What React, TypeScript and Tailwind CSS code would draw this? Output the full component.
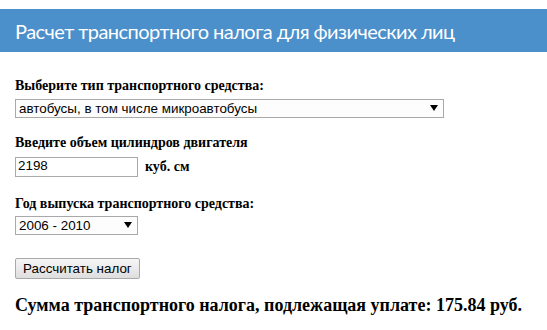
import React, { useState } from "react";

const serif = "font-['Liberation_Serif','Times_New_Roman',serif]";
const sans = "font-['Liberation_Sans',Arial,sans-serif]";

function Select({
  value,
  options,
  width,
  onChange,
}: {
  value: string;
  options: string[];
  width: string;
  onChange: (v: string) => void;
}) {
  return (
    <div className={`relative ${width}`}>
      <select
        value={value}
        onChange={(e) => onChange(e.target.value)}
        className={`${sans} block appearance-none w-full h-[19px] border border-[#a9a9a9] bg-[#fdfdfd] pl-[3px] pr-5 text-[13.4px] leading-[17px] text-black rounded-none outline-none`}
      >
        {options.map((o) => (
          <option key={o}>{o}</option>
        ))}
      </select>
      {/* dropdown arrow */}
      <span className="pointer-events-none absolute right-[6px] top-[6px] w-0 h-0 border-l-[4px] border-r-[4px] border-t-[6px] border-l-transparent border-r-transparent border-t-black" />
    </div>
  );
}

export default function App() {
  const [type, setType] = useState("автобусы, в том числе микроавтобусы");
  const [volume, setVolume] = useState("2198");
  const [year, setYear] = useState("2006 - 2010");

  return (
    <div className="w-[547px] h-[330px] bg-white overflow-hidden pt-[9px]">
      <div className="h-[43px] bg-[#4b8fcb] flex items-center pl-[15px]">
        <h1 className="font-['Lato',sans-serif] text-[20px] tracking-[-0.55px] text-white leading-none">
          Расчет транспортного налога для физических лиц
        </h1>
      </div>

      <div className="px-[15px] pt-[26px]">
        <label className={`${serif} block font-bold text-[14px] leading-[15px] text-black mb-[6px]`}>
          Выберите тип транспортного средства:
        </label>
        <Select
          value={type}
          onChange={setType}
          width="w-[429px]"
          options={[
            "легковые автомобили",
            "автобусы, в том числе микроавтобусы",
            "грузовые автомобили",
          ]}
        />

        <label className={`${serif} block font-bold text-[14px] leading-[15px] text-black mt-[17px] mb-[6px]`}>
          Введите объем цилиндров двигателя
        </label>
        <div className="flex items-center gap-[7px]">
          <input
            value={volume}
            onChange={(e) => setVolume(e.target.value)}
            className={`${sans} block w-[123px] h-[20px] border border-[#a9a9a9] px-[2px] text-[13.4px] text-black outline-none`}
          />
          <span className={`${serif} font-bold text-[14px] text-black`}>куб. см</span>
        </div>

        <label className={`${serif} block font-bold text-[14px] leading-[15px] text-black mt-[19px] mb-[5px]`}>
          Год выпуска транспортного средства:
        </label>
        <Select
          value={year}
          onChange={setYear}
          width="w-[123px]"
          options={["до 2000", "2001 - 2005", "2006 - 2010", "после 2010"]}
        />

        <button
          className={`${sans} block mt-[23px] h-[21px] px-[7px] border border-[#a9a9a9] rounded-[2px] bg-gradient-to-b from-[#f6f6f6] to-[#dedede] text-[13.4px] leading-none text-black`}
        >
          Рассчитать налог
        </button>

        <p className={`${serif} mt-[16px] font-bold text-[18px] leading-[20px] text-black`}>
          Сумма транспортного налога, подлежащая уплате: 175.84 руб.
        </p>
      </div>
    </div>
  );
}
